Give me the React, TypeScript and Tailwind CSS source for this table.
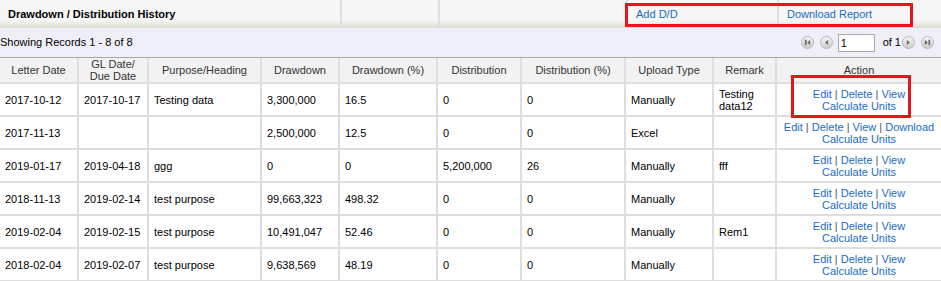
import React from 'react';

type Row = {
  letter: string;
  gl: string;
  purpose: string;
  drawdown: string;
  drawdownPct: string;
  dist: string;
  distPct: string;
  upload: string;
  remark: string;
  download?: boolean;
};

const rows: Row[] = [
  { letter: '2017-10-12', gl: '2017-10-17', purpose: 'Testing data', drawdown: '3,300,000', drawdownPct: '16.5', dist: '0', distPct: '0', upload: 'Manually', remark: 'Testing data12' },
  { letter: '2017-11-13', gl: '', purpose: '', drawdown: '2,500,000', drawdownPct: '12.5', dist: '0', distPct: '0', upload: 'Excel', remark: '', download: true },
  { letter: '2019-01-17', gl: '2019-04-18', purpose: 'ggg', drawdown: '0', drawdownPct: '0', dist: '5,200,000', distPct: '26', upload: 'Manually', remark: 'fff' },
  { letter: '2018-11-13', gl: '2019-02-14', purpose: 'test purpose', drawdown: '99,663,323', drawdownPct: '498.32', dist: '0', distPct: '0', upload: 'Manually', remark: '' },
  { letter: '2019-02-04', gl: '2019-02-15', purpose: 'test purpose', drawdown: '10,491,047', drawdownPct: '52.46', dist: '0', distPct: '0', upload: 'Manually', remark: 'Rem1' },
  { letter: '2018-02-04', gl: '2019-02-07', purpose: 'test purpose', drawdown: '9,638,569', drawdownPct: '48.19', dist: '0', distPct: '0', upload: 'Manually', remark: '' },
];

const colWidths = [79, 70, 113, 78, 98, 84, 104, 88, 63, 164];

// little round pager buttons (first / prev / next / last)
const PagerIcon: React.FC<{ kind: 'first' | 'prev' | 'next' | 'last' }> = ({ kind }) => {
  const flip = kind === 'next' || kind === 'last';
  const bar = kind === 'first' || kind === 'last';
  return (
    <svg width="13" height="13" viewBox="0 0 13 13" className="shrink-0">
      <defs>
        <linearGradient id={`pg-${kind}`} x1="0" y1="0" x2="0" y2="1">
          <stop offset="0" stopColor="#f6f6f6" />
          <stop offset="1" stopColor="#cccccc" />
        </linearGradient>
      </defs>
      <circle cx="6.5" cy="6.5" r="6" fill={`url(#pg-${kind})`} stroke="#b8b8b8" />
      <g transform={flip ? 'translate(13 0) scale(-1 1)' : undefined} fill="#6e6e6e">
        {bar ? (
          <>
            <rect x="3.8" y="3.8" width="1.8" height="5.4" />
            <path d="M9.2 3.8 L6.2 6.5 L9.2 9.2 Z" />
          </>
        ) : (
          <path d="M8.2 3.8 L5 6.5 L8.2 9.2 Z" />
        )}
      </g>
    </svg>
  );
};

const Link: React.FC<{ children: React.ReactNode }> = ({ children }) => (
  <span className="text-[#1b6cc6]">{children}</span>
);

const Sep = () => <span className="text-[#555]"> | </span>;

export default function App() {
  return (
    <div
      className="relative w-[941px] h-[281px] overflow-hidden bg-white text-[11px] text-black"
      style={{ fontFamily: '"Liberation Sans", Arial, sans-serif' }}
    >
      {/* title bar */}
      <div className="flex h-[28px] bg-[linear-gradient(to_bottom,#f6f6f6_0%,#f6f6f6_72%,#dddcd4_100%)]">
        <div className="w-[340px] flex items-center pl-[8px] font-bold">Drawdown / Distribution History</div>
        <div className="w-[98px] border-l-2 border-[#dedede]" />
        <div className="w-[188px] border-l-2 border-[#dedede]" />
        <div className="w-[151px] flex items-center pl-[8px] border-l-2 border-[#dedede]">
          <Link>Add D/D</Link>
        </div>
        <div className="flex-1 flex items-center pl-[8px] border-l-2 border-[#dedede]">
          <Link>Download Report</Link>
        </div>
      </div>

      {/* records / pager bar */}
      <div className="flex items-center justify-between h-[30px] bg-[#efeff9] border-b border-[#a8a8a8]">
        <span>Showing Records 1 - 8 of 8</span>
        <div className="flex items-center pr-[7px]">
          <PagerIcon kind="first" />
          <span className="w-[6px]" />
          <PagerIcon kind="prev" />
          <span className="w-[5px]" />
          <input
            readOnly
            value="1"
            className="w-[37px] h-[18px] border border-[#aaaaaa] bg-white px-[2px] text-[11px] outline-none"
          />
          <span className="ml-[8px] mr-[1px]">of 1</span>
          <PagerIcon kind="next" />
          <span className="w-[6px]" />
          <PagerIcon kind="last" />
        </div>
      </div>

      <table className="table-fixed border-separate border-spacing-0 w-[941px]">
        <colgroup>
          {colWidths.map((w, i) => (
            <col key={i} style={{ width: w }} />
          ))}
        </colgroup>
        <thead>
          <tr className="bg-[#f2f2f2] text-[#333]">
            {['Letter Date', 'GL Date/ Due Date', 'Purpose/Heading', 'Drawdown', 'Drawdown (%)', 'Distribution', 'Distribution (%)', 'Upload Type', 'Remark', 'Action'].map((h, i) => (
              <th
                key={h}
                className={`h-[25px] p-0 font-normal text-center leading-[12px] border-b-2 border-[#dedede] ${i < 9 ? 'border-r-2' : ''}`}
              >
                {h === 'GL Date/ Due Date' ? (
                  <>
                    GL Date/
                    <br />
                    Due Date
                  </>
                ) : (
                  h
                )}
              </th>
            ))}
          </tr>
        </thead>
        <tbody>
          {rows.map((r, i) => (
            <tr key={i} className="h-[33px]">
              {[r.letter, r.gl, r.purpose, r.drawdown, r.drawdownPct, r.dist, r.distPct, r.upload, r.remark].map((v, j) => (
                <td key={j} className="h-[33px] px-[5px] leading-[12px] align-middle border-b-2 border-r-2 border-[#dedede]">
                  {v}
                </td>
              ))}
              <td className="h-[33px] px-[4px] leading-[12px] text-center align-middle border-b-2 border-[#dedede]">
                <Link>Edit</Link>
                <Sep />
                <Link>Delete</Link>
                <Sep />
                <Link>View</Link>
                {r.download && (
                  <>
                    <Sep />
                    <Link>Download</Link>
                  </>
                )}
                <br />
                <Link>Calculate Units</Link>
              </td>
            </tr>
          ))}
        </tbody>
      </table>

      {/* red annotation boxes */}
      <div className="absolute left-[625px] top-[3px] w-[288px] h-[24px] border-[3px] border-[#e8141c]" />
      <div className="absolute left-[791px] top-[75px] w-[120px] h-[43px] border-[3px] border-[#e8141c]" />
    </div>
  );
}
